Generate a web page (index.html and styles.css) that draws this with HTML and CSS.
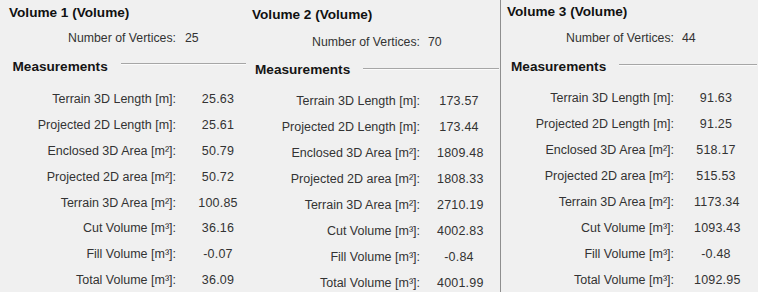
FILE: index.html
```html
<!DOCTYPE html>
<html>
<head>
<meta charset="utf-8">
<link rel="stylesheet" href="styles.css">
</head>
<body>
<div class="sheet">
  <section class="panel p1">
    <div class="title">Volume 1 (Volume)</div>
    <div class="vert"><span class="vl">Number of Vertices:</span><span class="vv">25</span></div>
    <div class="group"><span class="gname">Measurements</span><span class="rule"></span></div>
    <div class="rows">
      <span class="lab">Terrain 3D Length [m]:</span><span class="val">25.63</span>
      <span class="lab">Projected 2D Length [m]:</span><span class="val">25.61</span>
      <span class="lab">Enclosed 3D Area [m²]:</span><span class="val">50.79</span>
      <span class="lab">Projected 2D area [m²]:</span><span class="val">50.72</span>
      <span class="lab">Terrain 3D Area [m²]:</span><span class="val">100.85</span>
      <span class="lab">Cut Volume [m³]:</span><span class="val">36.16</span>
      <span class="lab">Fill Volume [m³]:</span><span class="val">-0.07</span>
      <span class="lab">Total Volume [m³]:</span><span class="val">36.09</span>
    </div>
  </section>
  <section class="panel p2">
    <div class="title">Volume 2 (Volume)</div>
    <div class="vert"><span class="vl">Number of Vertices:</span><span class="vv">70</span></div>
    <div class="group"><span class="gname">Measurements</span><span class="rule"></span></div>
    <div class="rows">
      <span class="lab">Terrain 3D Length [m]:</span><span class="val">173.57</span>
      <span class="lab">Projected 2D Length [m]:</span><span class="val">173.44</span>
      <span class="lab">Enclosed 3D Area [m²]:</span><span class="val">1809.48</span>
      <span class="lab">Projected 2D area [m²]:</span><span class="val">1808.33</span>
      <span class="lab">Terrain 3D Area [m²]:</span><span class="val">2710.19</span>
      <span class="lab">Cut Volume [m³]:</span><span class="val">4002.83</span>
      <span class="lab">Fill Volume [m³]:</span><span class="val">-0.84</span>
      <span class="lab">Total Volume [m³]:</span><span class="val">4001.99</span>
    </div>
  </section>
  <section class="panel p3">
    <div class="title">Volume 3 (Volume)</div>
    <div class="vert"><span class="vl">Number of Vertices:</span><span class="vv">44</span></div>
    <div class="group"><span class="gname">Measurements</span><span class="rule"></span></div>
    <div class="rows">
      <span class="lab">Terrain 3D Length [m]:</span><span class="val">91.63</span>
      <span class="lab">Projected 2D Length [m]:</span><span class="val">91.25</span>
      <span class="lab">Enclosed 3D Area [m²]:</span><span class="val">518.17</span>
      <span class="lab">Projected 2D area [m²]:</span><span class="val">515.53</span>
      <span class="lab">Terrain 3D Area [m²]:</span><span class="val">1173.34</span>
      <span class="lab">Cut Volume [m³]:</span><span class="val">1093.43</span>
      <span class="lab">Fill Volume [m³]:</span><span class="val">-0.48</span>
      <span class="lab">Total Volume [m³]:</span><span class="val">1092.95</span>
    </div>
  </section>
</div>
</body>
</html>
```
FILE: styles.css
```css
html, body {
  margin: 0;
  padding: 0;
  background: #f0f0f0;
}
body {
  font-family: "Liberation Sans", Arial, sans-serif;
  color: #333;
}
.sheet {
  display: flex;
  width: 758px;
  height: 292px;
  overflow: hidden;
}
.panel {
  display: flex;
  flex-direction: column;
  height: 292px;
  box-sizing: border-box;
}
.p1 {
  width: 247px;
  --title-top: 5px;
  --title-x: 9px;
  --vert-gap: 9px;
  --group-gap: 13px;
  --group-x: 12.5px;
  --rule-top: 4px;
  --rows-gap: 11px;
  --lab: 176px;
  --vgap: 9px;
  --valstart: 196px;
  --rowh: 25.9px;
}
.p2 {
  width: 253px;
  --title-top: 7px;
  --title-x: 5px;
  --vert-gap: 10.5px;
  --group-gap: 12.5px;
  --group-x: 8px;
  --rule-top: 6px;
  --rows-gap: 10px;
  --lab: 173px;
  --vgap: 8px;
  --valstart: 190px;
  --rowh: 26px;
}
.p3 {
  width: 258px;
  border-left: 1px solid #8e8e8e;
  --title-top: 4px;
  --title-x: 6px;
  --vert-gap: 9.5px;
  --group-gap: 13.5px;
  --group-x: 10px;
  --rule-top: 5px;
  --rows-gap: 10px;
  --lab: 173px;
  --vgap: 8px;
  --valstart: 193px;
  --rowh: 26px;
}
.title {
  margin-top: var(--title-top);
  padding-left: var(--title-x);
  font-weight: bold;
  font-size: 13.6px;
  line-height: 16px;
  color: #111;
  white-space: nowrap;
}
.vert {
  margin-top: var(--vert-gap);
  display: grid;
  grid-template-columns: var(--lab) auto;
  font-size: 12.3px;
  line-height: 16px;
}
.vl {
  text-align: right;
  white-space: nowrap;
}
.vv {
  padding-left: var(--vgap);
}
.group {
  margin-top: var(--group-gap);
  display: flex;
  align-items: flex-start;
  padding-left: var(--group-x);
  height: 16px;
}
.gname {
  font-weight: bold;
  font-size: 13.6px;
  line-height: 16px;
  color: #151515;
  white-space: nowrap;
}
.rule {
  flex: 1;
  margin-top: var(--rule-top);
  margin-left: 13px;
  margin-right: 1px;
  height: 0;
  border-top: 1px solid #a6a6a6;
  border-bottom: 1px solid #fbfbfb;
}
.rows {
  margin-top: var(--rows-gap);
  display: grid;
  grid-template-columns: var(--lab) calc(var(--valstart) - var(--lab)) 44px;
  grid-auto-rows: var(--rowh);
  align-items: center;
  font-size: 12.5px;
  line-height: 16px;
}
.lab {
  grid-column: 1;
  text-align: right;
  white-space: nowrap;
}
.val {
  grid-column: 3;
  text-align: center;
  white-space: nowrap;
  letter-spacing: 0.2px;
}
```
